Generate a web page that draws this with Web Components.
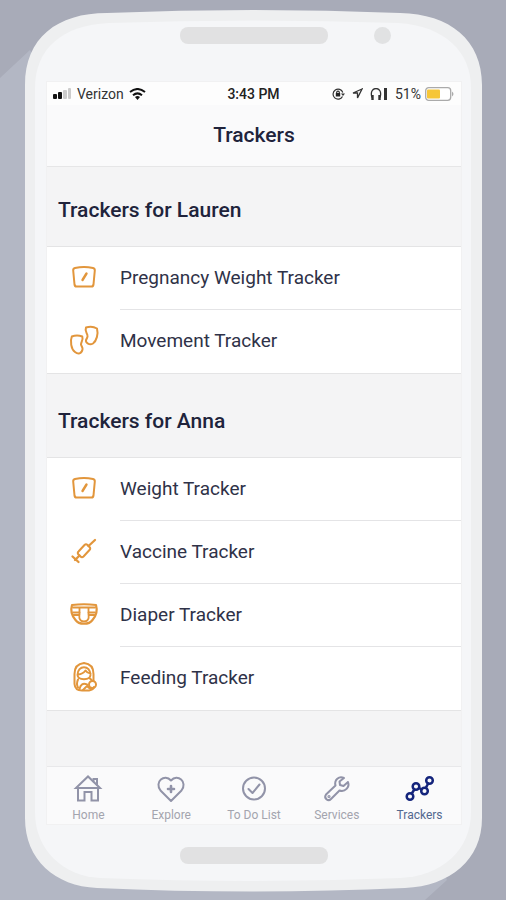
<!DOCTYPE html>
<html lang="en">
<head>
<meta charset="utf-8">
<meta name="viewport" content="width=device-width, initial-scale=1">
<title>Trackers</title>
<style>
html, body { margin: 0; min-height: 100%; }
body {
  font-family: Roboto, "Liberation Sans", sans-serif;
  color: #24283f;
  min-height: 100vh;
  display: flex;
  background: #b3b7c4;
}
phone-backdrop { flex: 1; }
</style>
</head>
<body>
<phone-backdrop>
  <phone-frame>
    <status-bar carrier="Verizon" time="3:43 PM" battery="51"></status-bar>
    <title-bar>Trackers</title-bar>
    <tracker-list>
      <tracker-group heading="Trackers for Lauren">
        <tracker-row icon="scale">Pregnancy Weight Tracker</tracker-row>
        <tracker-row icon="feet">Movement Tracker</tracker-row>
      </tracker-group>
      <tracker-group heading="Trackers for Anna" class="later">
        <tracker-row icon="scale">Weight Tracker</tracker-row>
        <tracker-row icon="syringe">Vaccine Tracker</tracker-row>
        <tracker-row icon="diaper">Diaper Tracker</tracker-row>
        <tracker-row icon="feeding">Feeding Tracker</tracker-row>
      </tracker-group>
    </tracker-list>
    <tab-bar>
      <tab-item icon="home">Home</tab-item>
      <tab-item icon="heart">Explore</tab-item>
      <tab-item icon="check">To Do List</tab-item>
      <tab-item icon="wrench">Services</tab-item>
      <tab-item icon="graph" active>Trackers</tab-item>
    </tab-bar>
  </phone-frame>
</phone-backdrop>
<script>
const ICONS = {
  scale: '<path d="M5 5Q14 3 23 5Q25 5.500 24.800 7.500L23.500 21.500Q23.200 23.500 21.500 23.500H6.500Q4.800 23.500 4.500 21.500L3.200 7.500Q3 5.500 5 5Z"/><path d="M12.500 17L16.500 10.500" stroke-width="2.400"/>',
  feet: '<path d="M16 1.500Q22 -.5 27 2.500C28.500 8 26.500 15 23 17.500C19.500 19.500 15.500 17 16 14C16.500 12.500 18 11.500 17.500 9.500C17 7 14.500 5 16 1.500Z"/><path d="M1.800 10.500Q7 8.500 12.300 10.500C13.500 14 11 16 11 18.500C11.500 20.500 13 21.500 12.500 23.500C11.500 28 8 28.500 5 26C1 23 0 15 1.800 10.500Z"/>',
  syringe: '<path d="M8.500 14.500L14.500 8Q16 6.500 17.500 8L19.500 10Q21 11.500 19.500 13L13.500 19.500Q12 21 10.500 19.500L8.500 17.500Q7 16 8.500 14.500Z"/><path d="M18.500 9L25 3M9.500 18.500L5 23M2.500 19.500L8.500 25" stroke-width="2.300"/>',
  diaper: '<path d="M2 5Q14 3.500 26 5C27.500 10 26 16 22.500 20C19 25 9 25 5.500 20C2 16 .5 10 2 5Z" stroke-width="2.200"/><path d="M3 7.500H9.500V12.500H3M25 7.500H18.500V12.500H25M9.500 7.500H18.500" stroke-width="1.800"/><path d="M3.500 15H8.500C10 15 9 17 9.500 18.500Q10.500 21.500 14 21.500Q17.500 21.500 18.500 18.500C19 17 18 15 19.500 15H24.500M9.500 12.500V15M18.500 12.500V15" stroke-width="1.800"/>',
  feeding: '<path d="M14 0Q23.500 1 23.500 11V18M14 0Q4.500 1 4.500 11V21Q5 27.500 12 27.500H19Q23.500 26.500 24 24"/><path d="M7.500 12C7.500 1.500 20.500 1.500 20.500 12C20 17.500 8 17.500 7.500 12ZM8 11.500Q13 11 15.500 7.500Q17 10 20.500 10.500M8 16.500Q6 21 8 24.500M20 15.500L22 17.500M9.500 26Q11 19 17 21.500Q17.500 25 21 25.500M13 27L16 24"/><circle cx="22.500" cy="21.500" r="3.500"/>',
  home: '<path d="M2 14L14 2.500L26 14H2Z" stroke-linejoin="miter"/><path d="M4 14V26.500H10.500V18H17.500V26.500H24V14M19.500 7.500V5H23V11" stroke-linejoin="miter"/>',
  heart: '<path d="M14 27L3.500 16.500C-3 8 7.500 -1 14 6.500C20.500 -1 31 8 24.500 16.500Z"/><path d="M14 12V18M11 15H17" stroke-width="2.600"/>',
  check: '<circle cx="14" cy="14.500" r="11"/><path d="M8.500 15L12.500 19L19.500 10.500"/>',
  wrench: '<path d="M21 4C16 1.500 11 6 12.500 11.500L3 20.500C.5 24 5 28 8 25L16.500 16.500C22 18.500 27 13 25 8L20.500 12L17 11L16.500 7.500Z"/><circle cx="6" cy="22.500" r=".6"/>',
  graph: '<g stroke-width="2.500"><circle cx="4" cy="22.500" r="3.300"/><circle cx="10" cy="12.500" r="3.300"/><circle cx="18.500" cy="17" r="3.300"/><circle cx="23.500" cy="6.500" r="3.300"/><path d="M5.800 19.500L8.300 15.500M13 14L15.500 15.300M19.800 13.800L22.200 9.500"/></g>'
};

function define(name, render) {
  customElements.define(name, class extends HTMLElement {
    constructor() {
      super();
      this.attachShadow({ mode: 'open' });
    }
    connectedCallback() {
      this.shadowRoot.innerHTML = render(this);
    }
  });
}

define('line-icon', el => `
  <style>
    :host { display: block; width: 28px; height: 28px; }
    svg { display: block; width: 100%; height: 100%; overflow: visible; }
  </style>
  <svg viewBox="0 0 28 28" fill="none" stroke="currentColor" stroke-width="2" stroke-linecap="round" stroke-linejoin="round" aria-hidden="true">${ICONS[el.getAttribute('name')]}</svg>`);

define('phone-backdrop', () => `
  <style>
    :host { display: grid; position: relative; box-sizing: border-box; min-height: 100vh; padding: 10px 24px 8px 25px; background: #b3b7c4; overflow: hidden; }
    .shade { position: absolute; inset: 0; width: 100%; height: 100%; }
  </style>
  <svg class="shade" viewBox="0 0 506 900" preserveAspectRatio="none" aria-hidden="true"><path d="M0 78V0H506V900H425L447 880L250 400L30 50Z" fill="#a8abb8"/></svg>
  <slot></slot>`);

define('phone-frame', () => `
  <style>
    :host { display: flex; flex-direction: column; position: relative; box-sizing: border-box; padding: 0 21px 0 22px; min-width: 0; }
    .shell { position: absolute; inset: 0; width: 100%; height: 100%; }
    .top, .bottom { position: relative; display: grid; grid-template-columns: 1fr 148px 1fr; align-items: center; }
    .top { padding: 17px 0 38px; }
    .bottom { padding: 23px 0 28px; }
    .pill { grid-column: 2; height: 17px; border-radius: 8px; background: #e1e1e2; }
    .lens { width: 17px; height: 17px; margin-left: 46px; border-radius: 50%; background: #e1e2e3; }
    main { position: relative; flex: 1; display: flex; flex-direction: column; background: #fafafb; box-shadow: 0 0 0 1px #f1f1f2; }
  </style>
  <svg class="shell" viewBox="0 0 457 882" preserveAspectRatio="none" aria-hidden="true">
    <path d="M0 75C0 28 32 3 82 3Q228 -3 375 3C425 4 457 30 457 75V808C457 850 425 876 380 878Q228 885 72 878C30 876 0 850 0 808Z" fill="#eeeff0"/>
    <path d="M10 78C10 39 37 15 84 13Q228 8 373 13C420 16 446 42 446 78V802C446 840 417 866 375 868Q228 874 75 868C38 866 10 840 10 802Z" fill="#f5f6f8"/>
  </svg>
  <div class="top"><span class="pill"></span><span class="lens"></span></div>
  <main><slot></slot></main>
  <div class="bottom"><span class="pill"></span></div>`);

define('status-bar', el => `
  <style>
    :host { display: grid; grid-template-columns: 1fr auto 1fr; align-items: center; height: 23px; padding: 0 7px 0 6px; background: #fdfdfd; font-size: 14px; color: #333; }
    .left, .right { display: flex; align-items: center; }
    .left { gap: 5px; }
    .right { justify-content: flex-end; gap: 7px; }
    .power { display: flex; align-items: center; gap: 4px; }
    .time { font-weight: 500; color: #222; }
    svg { display: block; }
  </style>
  <div class="left">
    <svg width="19" height="11" viewBox="0 0 19 11"><rect y="6" width="4" height="5" rx="1" fill="#111"/><rect x="5" y="4" width="4" height="7" rx="1" fill="#111"/><rect x="10" y="2" width="4" height="9" rx="1" fill="#ccc"/><rect x="15" width="3" height="11" rx="1" fill="#ccc"/></svg>
    <span>${el.getAttribute('carrier')}</span>
    <svg width="17" height="12" viewBox="0 0 17 12" fill="none" stroke="#111" stroke-width="2"><path d="M1 4Q8.500 -2 16 4M4 7.300Q8.500 3.500 13 7.300"/><path d="M6 9Q8.500 7 11 9L8.500 12Z" fill="#111" stroke="none"/></svg>
  </div>
  <span class="time">${el.getAttribute('time')}</span>
  <div class="right">
    <svg width="13" height="12" viewBox="0 0 13 12" fill="none" stroke="#333" stroke-width="1.200"><path d="M10.800 4.500A5 5 0 1 0 10.500 8.500"/><path d="M9 5.500H13L11 8Z" fill="#333" stroke="none"/><path d="M4.700 5.500V4Q6 2.200 7.300 4V5.500"/><path d="M3.800 5H8.200V8.500H3.800Z" fill="#222" stroke="none"/></svg>
    <svg width="11" height="11" viewBox="0 0 11 11" fill="none" stroke="#333" stroke-width="1.300"><path d="M10 1L1 5H5.500V10Z"/></svg>
    <svg width="18" height="12" viewBox="0 0 18 12" fill="none" stroke="#333" stroke-width="1.300"><path d="M2 9.500C-2 -2.500 14 -2.500 10 9.500"/><path d="M2.500 7V12M9.500 7V12" stroke-width="2.400"/><path d="M14 0H17V12H14Z" fill="#333" stroke="none"/></svg>
    <span class="power"><span>${el.getAttribute('battery')}%</span>
    <svg width="29" height="14" viewBox="0 0 29 14"><rect x=".7" y=".7" width="25" height="12.600" rx="3" fill="#fff" stroke="#aaa" stroke-width="1.300"/><rect x="2" y="2.500" width="13" height="9" rx="1" fill="#f6c638"/><path d="M27 4.500Q30 7 27 9.500Z" fill="#aaa"/></svg></span>
  </div>`);

define('title-bar', () => `
  <style>
    :host { display: block; border-bottom: 1px solid #e6e6e7; background: #fafafb; }
    h1 { margin: 0; padding: 16px 0 17px; font-size: 21px; line-height: 28px; font-weight: 500; text-align: center; color: #20233b; }
  </style>
  <h1><slot></slot></h1>`);

define('tracker-list', () => `
  <style>:host { display: block; flex: 1; background: #f4f4f5; }</style>
  <slot></slot>`);

define('tracker-group', el => `
  <style>
    :host { display: block; }
    h2 { margin: 0; padding: 29px 11px 22px; font-size: 21px; line-height: 28px; font-weight: 500; color: #20233b; }
    :host(.later) h2 { padding-top: 33px; }
    .rows { background: #fff; border: solid #e4e4e5; border-width: 1px 0; }
  </style>
  <h2>${el.getAttribute('heading')}</h2>
  <div class="rows"><slot></slot></div>`);

define('tracker-row', el => `
  <style>
    :host { display: block; }
    button { display: grid; grid-template-columns: 73px 1fr; align-items: stretch; width: 100%; padding: 0; border: 0; background: none; font: inherit; font-size: 19px; line-height: 24px; color: #2f3248; text-align: left; }
    line-icon { margin: 16px auto 0; color: #e2963c; }
    .label { padding: 19px 0; border-bottom: 1px solid #e4e4e6; }
    :host(:last-child) .label { border-bottom-color: transparent; }
  </style>
  <button type="button"><line-icon name="${el.getAttribute('icon')}"></line-icon><span class="label"><slot></slot></span></button>`);

define('tab-bar', () => `
  <style>
    :host { display: block; border-top: 1px solid #e8e8ea; background: #fafafb; }
    nav { display: grid; grid-template-columns: repeat(5, 1fr); }
  </style>
  <nav aria-label="Sections"><slot></slot></nav>`);

define('tab-item', el => `
  <style>
    :host { display: block; color: #a3a4ae; --icon: #9193a8; }
    :host([active]) { color: #53688f; --icon: #14247c; }
    a { display: flex; flex-direction: column; align-items: center; padding: 7px 0 1px; gap: 5px; color: inherit; text-decoration: none; font-size: 12px; line-height: 16px; white-space: nowrap; }
    line-icon { color: var(--icon); }
  </style>
  <a href="#${el.getAttribute('icon')}"${el.hasAttribute('active') ? ' aria-current="page"' : ''}><line-icon name="${el.getAttribute('icon')}"></line-icon><span><slot></slot></span></a>`);
</script>
</body>
</html>
